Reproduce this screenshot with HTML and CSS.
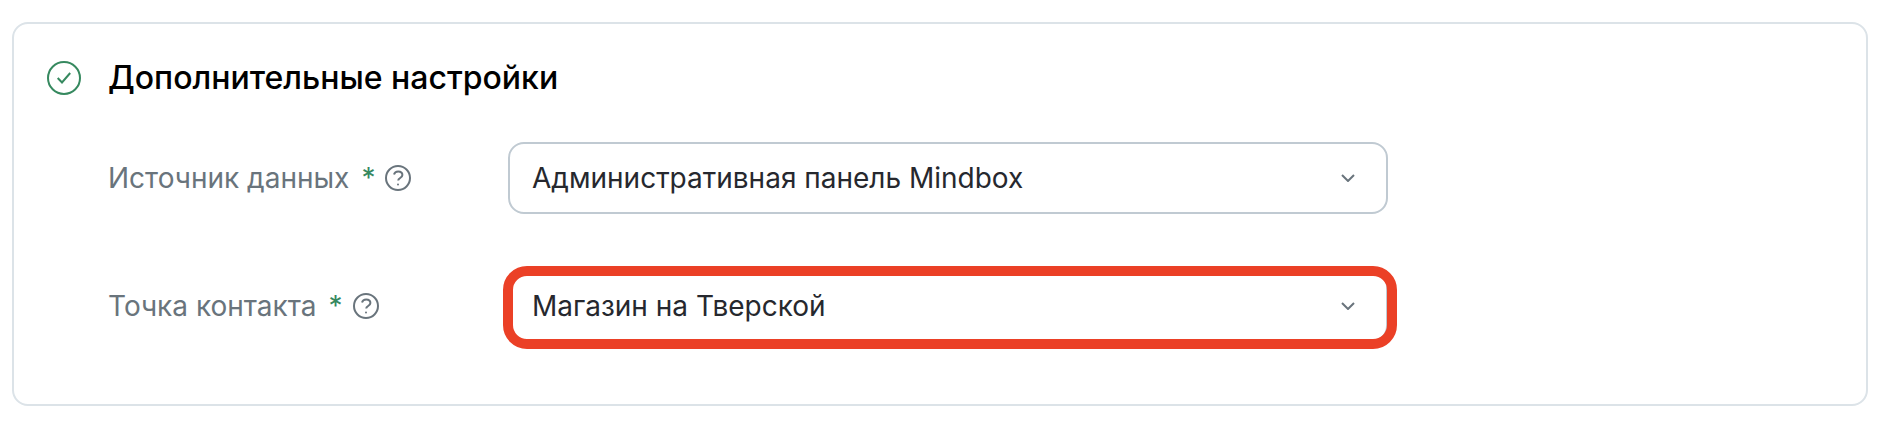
FILE: index.html
```html
<!DOCTYPE html>
<html lang="ru">
<head>
<meta charset="utf-8">
<meta name="viewport" content="width=device-width, initial-scale=1">
<title>Дополнительные настройки</title>
<link rel="stylesheet" href="styles.css">
</head>
<body>
<main class="page">
  <section class="card" aria-labelledby="settings-title">
    <header class="card-header">
      <svg class="status-icon" viewBox="0 0 34 34" aria-hidden="true">
        <circle cx="17" cy="17" r="16"/>
        <path d="M10.700 17l4.300 4.500L23.200 12"/>
      </svg>
      <h2 class="card-title" id="settings-title">Дополнительные настройки</h2>
    </header>
    <form class="fields">
      <div class="field">
        <div class="field-label">
          <label for="source">Источник данных</label>
          <span class="required">*</span>
          <button class="help" type="button" aria-label="Подсказка: источник данных">
            <svg class="help-icon" viewBox="0 0 26 26" aria-hidden="true">
              <circle cx="13" cy="13" r="12"/>
              <path d="M9 9.500c.5-1.900 2.100-3.100 4.200-3.100 2.400 0 4.200 1.500 4.200 3.600 0 3-4.200 3-4.200 5.500"/>
              <circle class="dot" cx="13" cy="19.500" r="1"/>
            </svg>
          </button>
        </div>
        <div class="select-box">
          <select class="select" id="source">
            <option>Административная панель Mindbox</option>
          </select>
          <svg class="chevron" viewBox="0 0 14 8" aria-hidden="true"><path d="M1 1l6 6 6-6"/></svg>
        </div>
      </div>
      <div class="field">
        <div class="field-label">
          <label for="touchpoint">Точка контакта</label>
          <span class="required">*</span>
          <button class="help" type="button" aria-label="Подсказка: точка контакта">
            <svg class="help-icon" viewBox="0 0 26 26" aria-hidden="true">
              <circle cx="13" cy="13" r="12"/>
              <path d="M9 9.500c.5-1.900 2.100-3.100 4.200-3.100 2.400 0 4.200 1.500 4.200 3.600 0 3-4.200 3-4.200 5.500"/>
              <circle class="dot" cx="13" cy="19.500" r="1"/>
            </svg>
          </button>
        </div>
        <div class="select-box highlighted">
          <select class="select" id="touchpoint">
            <option>Магазин на Тверской</option>
          </select>
          <svg class="chevron" viewBox="0 0 14 8" aria-hidden="true"><path d="M1 1l6 6 6-6"/></svg>
        </div>
      </div>
    </form>
  </section>
</main>
</body>
</html>
```

FILE: styles.css
```css
* {
  box-sizing: border-box;
}

body {
  margin: 0;
  background: #fff;
  color: #26282e;
  font-family: Inter, "Noto Sans", sans-serif;
  font-size: 28px;
  line-height: 40px;
}

.page {
  padding: 22px 22px 28px 12px;
}

.card {
  padding: 34px 33px 62px;
  border: 2px solid #dce3e8;
  border-radius: 16px;
}

.card-header {
  display: flex;
  align-items: center;
  gap: 27px;
  margin-bottom: 44px;
}

.status-icon {
  flex: none;
  width: 34px;
  height: 34px;
  fill: none;
  stroke: #36895f;
  stroke-width: 2;
}

.card-title {
  margin: 0;
  color: #000;
  font-size: 32px;
  font-weight: 500;
  line-height: 40px;
}

.fields {
  display: flex;
  flex-direction: column;
  gap: 56px;
  padding-left: 61px;
}

.field {
  display: flex;
  align-items: center;
}

.field-label {
  display: flex;
  flex: none;
  align-items: center;
  width: 400px;
  color: #69747c;
}

.required {
  margin-left: 12px;
  color: #36895f;
}

.help {
  display: flex;
  margin-left: 10px;
  padding: 0;
  border: 0;
  background: none;
}

.help-icon {
  width: 26px;
  height: 26px;
  fill: none;
  stroke: #69747c;
  stroke-width: 2;
}

.help-icon .dot {
  fill: #69747c;
  stroke: none;
}

.select-box {
  position: relative;
  flex: 0 1 880px;
  min-width: 0;
}

.select {
  display: block;
  width: 100%;
  height: 72px;
  padding: 0 72px 0 22px;
  border: 2px solid #c0cad2;
  border-radius: 16px;
  appearance: none;
  background: #fff;
  color: inherit;
  font: inherit;
}

.chevron {
  position: absolute;
  top: 32px;
  right: 33px;
  width: 14px;
  height: 8px;
  fill: none;
  stroke: #69747c;
  stroke-width: 2;
  pointer-events: none;
}

.highlighted::after {
  content: "";
  position: absolute;
  inset: -4px -9px -7px -5px;
  border: 10px solid #eb4026;
  border-radius: 24px;
  pointer-events: none;
}
```
